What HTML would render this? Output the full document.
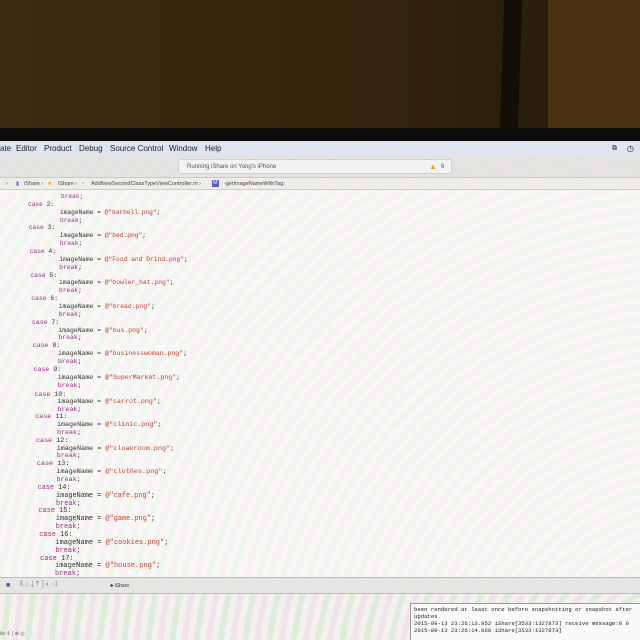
<!DOCTYPE html>
<html><head><meta charset="utf-8"><style>
*{margin:0;padding:0;box-sizing:border-box}
body{width:640px;height:640px;overflow:hidden;position:relative;background:#2c2010;font-family:"Liberation Sans",sans-serif}
.wall{position:absolute;left:0;top:0;width:640px;height:132px;background:linear-gradient(90deg,#3a2a10 0%,#32240e 60%,#2a1e0c 80%)}
.wall2{position:absolute;left:548px;top:0;width:92px;height:130px;background:#4a3412}
.bar{position:absolute;left:502px;top:0;width:18px;height:132px;background:#140e06;transform:skewX(-2deg)}
.bezel{position:absolute;left:0;top:128px;width:640px;height:14px;background:#0e0c0a}
.screen{position:absolute;left:0;top:141px;width:640px;height:499px;background:#f2f1ee;overflow:hidden}
.moire{position:absolute;inset:0;background:repeating-radial-gradient(circle at 700px 560px,rgba(160,220,150,.22) 0 6px,rgba(255,255,255,0) 6px 12px,rgba(230,170,220,.2) 12px 18px,rgba(255,255,255,0) 18px 24px)}
.menu{position:absolute;left:0;top:0;width:640px;height:15px;background:rgba(222,226,240,.9);font-size:8px;color:#222;line-height:15px}
.menu span{position:absolute}
.tool{position:absolute;left:0;top:15px;width:640px;height:22px;background:rgba(226,224,222,.85);border-bottom:1px solid #c8c8c8}
.status{position:absolute;left:178px;top:3px;width:274px;height:15px;background:rgba(245,243,243,.9);border:1px solid #d0d0d0;border-radius:3px;font-size:6px;color:#555;line-height:14px}
.path{position:absolute;left:0;top:37px;width:640px;height:12px;background:rgba(238,236,234,.9);border-bottom:1px solid #ccc;font-size:5.5px;color:#444;line-height:12px}
.path span{position:absolute}
.code{position:absolute;left:0;top:49px;width:640px;height:389px;background:rgba(252,252,250,.6)}
.l{position:absolute;font-family:"Liberation Mono",monospace;white-space:pre;color:#333;line-height:8px}
.k{color:#a02a8a}.s{color:#c8412c}
.bottom{position:absolute;left:0;top:436px;width:640px;height:17px;background:rgba(228,228,226,.9);border-top:1px solid #bbb;border-bottom:1px solid #bbb;font-size:5px;color:#333}
.console{position:absolute;left:410px;top:462px;width:230px;height:40px;background:#fafafa;border-left:1px solid #999;border-top:1px solid #999;font-family:"Liberation Mono",monospace;font-size:5.6px;line-height:7px;color:#222;padding:2px 3px;white-space:pre}
</style></head><body>
<div class="wall"></div><div class="wall2"></div><div class="bar"></div><div class="bezel"></div>
<div class="screen">
<div class="moire"></div>
<div class="menu"><span style="left:0">ate</span><span style="left:16px">Editor</span><span style="left:44px">Product</span><span style="left:79px">Debug</span><span style="left:110px">Source Control</span><span style="left:169px">Window</span><span style="left:205px">Help</span><span style="left:612px;font-size:7px">⧉</span><span style="left:627px;font-size:8px">◷</span></div>
<div class="tool"><div class="status"><span style="position:absolute;left:8px">Running iShare on Yong's iPhone</span><span style="position:absolute;left:250px;color:#f0a020;font-size:8px">▲</span><span style="position:absolute;left:262px">6</span></div></div>
<div class="path"><span style="left:6px">›</span><span style="left:16px;color:#4a7ad0">▮</span><span style="left:24px">iShare ›</span><span style="left:48px;color:#e8c040">■</span><span style="left:58px">iShare ›</span><span style="left:82px;color:#888">▫</span><span style="left:91px">AddNewSecondClassTypeViewController.m ›</span><span style="left:212px;background:#5a5ab8;color:#fff;padding:0 1px;line-height:7px;top:2px">M</span><span style="left:224px">-getImageNameWithTag:</span></div>
<div class="code" id="c"></div>
<div class="bottom"><span style="position:absolute;left:6px;top:4px;color:#2a5cc8;font-size:7px">■</span><span style="position:absolute;left:20px;top:3px;color:#888;font-size:7px">‖ ⌂ ⤓ ⤒ │◐ ◁</span><span style="position:absolute;left:110px;top:5px">♣ iShare</span></div>
<div class="console">been rendered at least once before snapshotting or snapshot after
updates.
2015-09-13 23:26:13.852 iShare[3533:1327873] receive message:0 0
2015-09-13 23:26:14.868 iShare[3533:1327873]</div>
<div style="position:absolute;left:0;top:490px;font-size:5px;color:#666">ile ⇕ | ⊗ ◎</div>
</div>
<script>
var names=["barbell","bed","Food and Drind","bowler_hat","bread","bus","businesswoman","SuperMarket","carrot","clinic","cloakroom","clothes","cafe","game","cookies","house"];
var h='';
function line(i,x,fs,html){h+='<div class="l" style="top:'+(3+i*7.86)+'px;left:'+x+'px;font-size:'+fs+'px">'+html+'</div>';}
line(0,61,6.2,'<span class="k">break</span>;');
for(var g=0;g<16;g++){var fs=(6.2+0.055*g).toFixed(2);var cx=(28+0.8*g).toFixed(1);var ix=(60-0.33*g).toFixed(1);
line(1+g*3,cx,fs,'<span class="k">case</span> '+(g+2)+':');
line(2+g*3,ix,fs,'imageName = <span class="s">@"'+names[g]+'.png"</span>;');
line(3+g*3,ix,fs,'<span class="k">break</span>;');}
document.getElementById('c').innerHTML=h;
</script>
</body></html>
